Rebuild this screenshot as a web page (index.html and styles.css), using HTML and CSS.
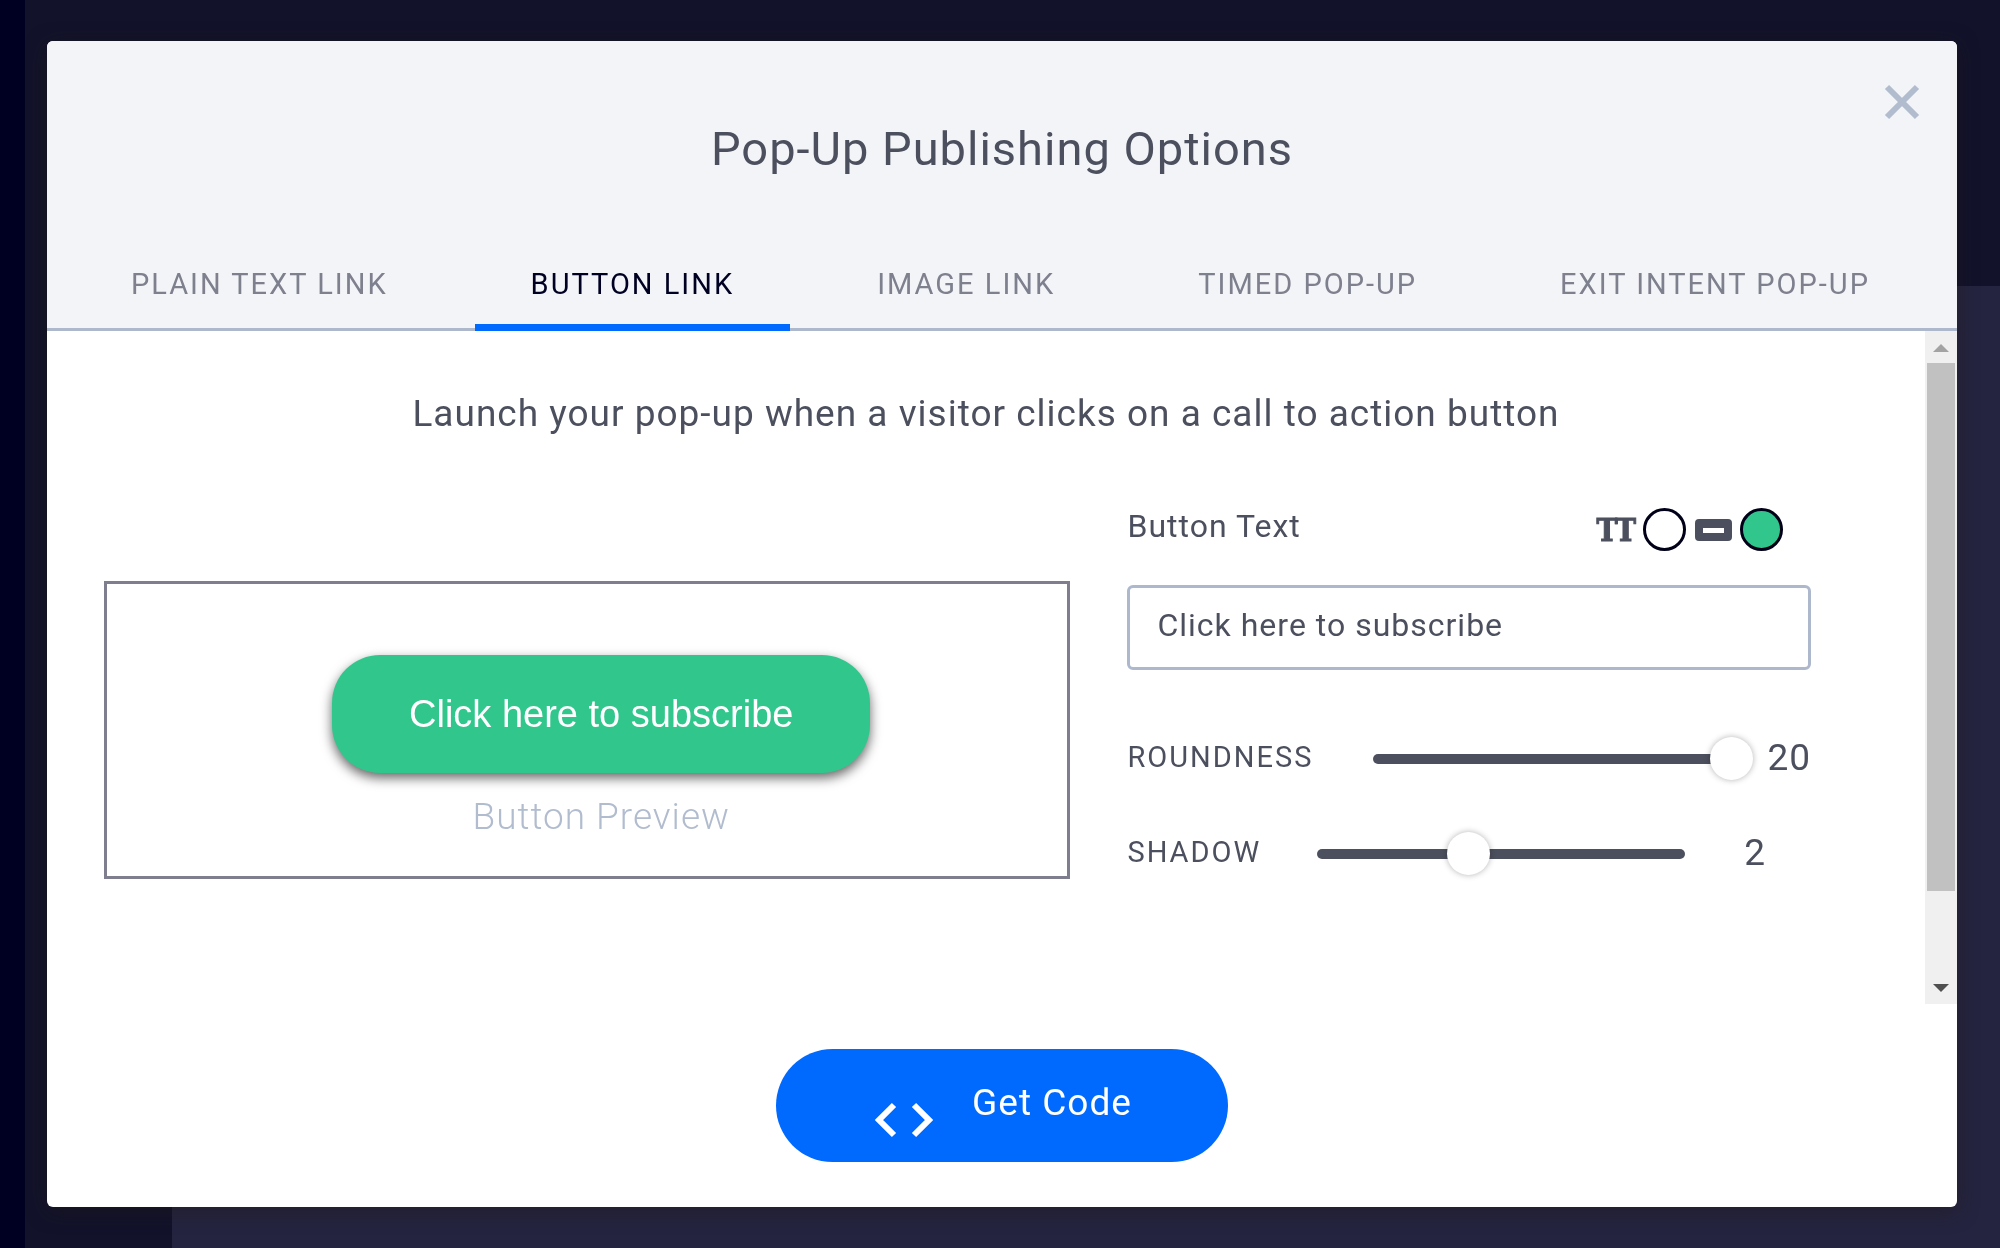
FILE: index.html
```html
<!DOCTYPE html>
<html lang="en">
<head>
	<meta charset="utf-8">
	<title>Pop-Up Publishing Options</title>
	<link rel="stylesheet" href="styles.css">
</head>
<body>

<div class="backdrop">
	<div class="backdrop-nav"></div>
	<div class="backdrop-panel"></div>
</div>

<div class="modal" role="dialog" aria-labelledby="modal-title">
	<header class="modal-header">
		<button class="close" type="button" aria-label="Close">
			<svg width="36" height="36" viewBox="0 0 36 36"><path d="M3 3L33 33M33 3L3 33" fill="none" stroke="#b1bccf" stroke-width="6"/></svg>
		</button>
		<h1 class="modal-title" id="modal-title">Pop-Up Publishing Options</h1>
		<nav class="tabs">
			<a class="tab" href="#">PLAIN TEXT LINK</a>
			<a class="tab active" href="#">BUTTON LINK</a>
			<a class="tab" href="#">IMAGE LINK</a>
			<a class="tab" href="#">TIMED POP-UP</a>
			<a class="tab" href="#">EXIT INTENT POP-UP</a>
		</nav>
	</header>

	<div class="modal-body">
		<div class="content">
			<p class="intro">Launch your pop-up when a visitor clicks on a call to action button</p>
			<div class="columns">
				<div class="preview">
					<button class="preview-button" type="button">Click here to subscribe</button>
					<span class="preview-label">Button Preview</span>
				</div>

				<form class="options">
					<div class="text-row">
						<label for="button-text">Button Text</label>
						<div class="colors">
							<span class="tt">TT</span>
							<button class="swatch" type="button" aria-label="Text color"></button>
							<svg class="btn-icon" width="37" height="22" viewBox="0 0 37 22"><path fill="#4c505e" fill-rule="evenodd" d="M4 0h29a4 4 0 0 1 4 4v14a4 4 0 0 1-4 4H4a4 4 0 0 1-4-4V4a4 4 0 0 1 4-4zM8 9v5h21V9z"/></svg>
							<button class="swatch green" type="button" aria-label="Button color"></button>
						</div>
					</div>
					<input class="text-input" id="button-text" type="text" value="Click here to subscribe">
					<div class="slider-row">
						<label for="roundness">ROUNDNESS</label>
						<input class="slider wide" id="roundness" type="range" min="0" max="20" value="20">
						<output for="roundness">20</output>
					</div>
					<div class="slider-row">
						<label for="shadow">SHADOW</label>
						<input class="slider" id="shadow" type="range" min="0" max="5" value="2">
						<output for="shadow">2</output>
					</div>
				</form>
			</div>
		</div>

		<div class="scrollbar" aria-hidden="true">
			<div class="arrow up"></div>
			<div class="thumb"></div>
			<div class="arrow down"></div>
		</div>
	</div>

	<footer class="modal-footer">
		<button class="get-code" type="button">
			<svg class="code-icon" width="60" height="36" viewBox="0 0 60 36"><path d="M20 3L5 18L20 33M40 3L55 18L40 33" fill="none" stroke="#fff" stroke-width="6"/></svg>
			<span>Get Code</span>
		</button>
	</footer>
</div>

</body>
</html>
```

FILE: styles.css
```css
* {
	box-sizing: border-box;
}

body {
	margin: 0;
	height: 100vh;
	overflow: hidden;
	background: #12122b;
	color: #4c505e;
	font-family: Roboto, "Liberation Sans", sans-serif;
	letter-spacing: 1px;
}

button, input {
	font-family: inherit;
	letter-spacing: inherit;
	color: inherit;
}

button {
	border: 0;
	padding: 0;
	background: none;
	cursor: pointer;
}

/* dimmed page behind the modal */
.backdrop {
	display: flex;
	height: 100%;
}

.backdrop-nav {
	width: 25px;
	background: #000022;
}

.backdrop-panel {
	flex: 1;
	margin: 286px 0 0 147px;
	background: #252440;
}

.modal {
	position: fixed;
	top: 41px;
	right: 43px;
	bottom: 41px;
	left: 47px;
	display: flex;
	flex-direction: column;
	background: #fff;
	border-radius: 6px;
	overflow: hidden;
	box-shadow: 0 4px 20px rgba(30, 25, 20, 0.5);
}

.modal-header {
	background: #f3f4f8;
	border-bottom: 3px solid #adb8cc;
}

.close {
	position: absolute;
	top: 43px;
	right: 37px;
	width: 36px;
	height: 36px;
}

.modal-title {
	margin: 0;
	padding-top: 80px;
	font-size: 47px;
	line-height: 56px;
	font-weight: 400;
	text-align: center;
}

.tabs {
	display: flex;
	justify-content: space-between;
	padding: 73px 31px 0 28px;
}

.tab {
	padding: 18px 56px 24px;
	margin-bottom: -3px;
	border-bottom: 7px solid transparent;
	color: #7e808e;
	font-size: 29px;
	line-height: 32px;
	letter-spacing: 2px;
	text-decoration: none;
}

.tab.active {
	color: #000022;
	border-color: #006aff;
}

.modal-body {
	flex: 1;
	min-height: 0;
	display: flex;
}

.content {
	flex: 1;
	padding: 61px 114px 0 57px;
}

.intro {
	margin: 0 -114px 0 -57px;
	font-size: 37px;
	line-height: 44px;
	text-align: center;
}

.columns {
	display: grid;
	grid-template-columns: 968fr 682fr;
	gap: 57px;
	padding-top: 72px;
	align-items: start;
}

.preview {
	display: flex;
	flex-direction: column;
	align-items: center;
	margin-top: 73px;
	padding: 71px 0 35px 28px;
	border: 3px solid #7e7e8e;
}

.preview-button {
	padding: 0 77px;
	border-radius: 48px;
	background: #31c78c;
	color: #fff;
	font-family: "Liberation Sans", Arial, sans-serif;
	font-size: 38px;
	line-height: 118px;
	letter-spacing: normal;
	box-shadow: 0 5px 12px rgba(0, 0, 0, 0.6);
}

.preview-label {
	margin-top: 20px;
	color: #b1bccf;
	font-size: 37px;
	line-height: 48px;
	font-weight: 300;
}

.text-row {
	display: flex;
	justify-content: space-between;
	padding-right: 28px;
	font-size: 32px;
	line-height: 36px;
}

.colors {
	display: flex;
	align-items: center;
	height: 43px;
}

.tt {
	font-family: "DejaVu Serif Condensed", "DejaVu Serif", serif;
	font-size: 31px;
	font-weight: 700;
	letter-spacing: -1px;
	-webkit-text-stroke: 1px #4c505e;
}

.swatch {
	width: 43px;
	height: 43px;
	margin-left: 8px;
	border: 3px solid #000018;
	border-radius: 50%;
	background: #fff;
}

.swatch.green {
	background: #31c78c;
}

.btn-icon {
	margin-left: 9px;
}

.text-input {
	display: block;
	width: 100%;
	height: 85px;
	margin: 34px 0 60px;
	padding: 0 27px 6px;
	border: 3px solid #adb8cd;
	border-radius: 6px;
	font-size: 32px;
}

.slider-row {
	display: flex;
	align-items: center;
	height: 58px;
	margin-bottom: 37px;
}

.slider-row label {
	padding-bottom: 4px;
	font-size: 29px;
	letter-spacing: 2px;
}

.slider-row output {
	flex: 1;
	padding-bottom: 4px;
	font-size: 37px;
	text-align: center;
}

.slider {
	appearance: none;
	width: 368px;
	height: 43px;
	margin: 0 14px 0 56px;
	background: none;
}

.slider.wide {
	width: 380px;
	margin-left: 60px;
}

.slider::-webkit-slider-runnable-track {
	height: 10px;
	border-radius: 5px;
	background: #4c505e;
}

/* the track stops under the knob at full value */
.slider.wide::-webkit-slider-runnable-track {
	background: linear-gradient(to right, #4c505e calc(100% - 12px), transparent 0);
}

.slider::-webkit-slider-thumb {
	appearance: none;
	width: 43px;
	height: 43px;
	margin-top: -17px;
	border-radius: 50%;
	background: #fff;
	box-shadow: 0 0 6px rgba(0, 0, 0, 0.3);
}

.scrollbar {
	display: flex;
	flex-direction: column;
	width: 32px;
	background: #f0f0f0;
}

.scrollbar .thumb {
	height: 528px;
	margin: 0 2px;
	background: #c1c1c1;
}

.arrow {
	align-self: center;
	border: 8px solid transparent;
}

.arrow.up {
	margin: 5px 0 11px;
	border-bottom-color: #a3a3a3;
}

.arrow.down {
	margin: auto 0 4px;
	border-top-color: #505050;
}

.modal-footer {
	display: flex;
	justify-content: center;
	padding: 45px 0;
}

.get-code {
	display: flex;
	align-items: center;
	height: 113px;
	padding: 0 96px 0 98px;
	border-radius: 57px;
	background: #006aff;
	color: #fff;
	font-size: 37px;
	line-height: 44px;
}

.get-code span {
	margin: 0 0 6px 38px;
}

.code-icon {
	margin-top: 28px;
}
```
